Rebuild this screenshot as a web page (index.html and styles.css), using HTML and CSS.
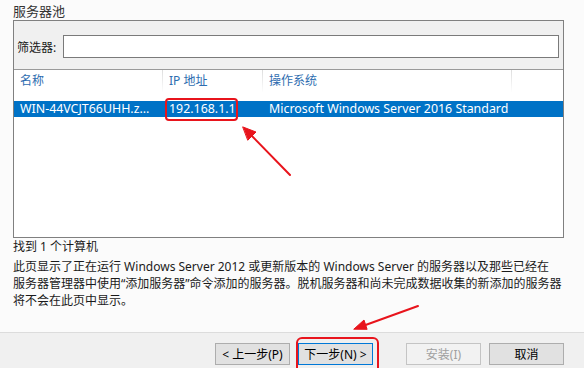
FILE: index.html
```html
<!DOCTYPE html>
<html lang="zh-CN">
<head>
    <meta charset="UTF-8">
    <title>选择目标服务器</title>
    <link rel="stylesheet" href="styles.css">
</head>
<body>
    <div class="pagina">
        <div class="conteudo">
            <div class="titulo">服务器池</div>
            <div class="painel">
                <div class="filtro">
                    <label class="filtro-rotulo" for="filtro">筛选器:</label>
                    <input type="text" id="filtro" class="filtro-campo">
                </div>
                <div class="grade cabecalho">
                    <div class="celula">名称</div>
                    <div class="celula">IP 地址</div>
                    <div class="celula">操作系统</div>
                    <div class="celula"></div>
                </div>
                <div class="grade linha selecionada">
                    <div class="celula">WIN-44VCJT66UHH.z...</div>
                    <div class="celula">192.168.1.1</div>
                    <div class="celula">Microsoft Windows Server 2016 Standard</div>
                    <div class="celula"></div>
                </div>
            </div>
            <div class="status">找到 1 个计算机</div>
            <p class="descricao">此页显示了正在运行 Windows Server 2012 或更新版本的 Windows Server 的服务器以及那些已经在<br>服务器管理器中使用“添加服务器”命令添加的服务器。脱机服务器和尚未完成数据收集的新添加的服务器<br>将不会在此页中显示。</p>
        </div>
        <div class="rodape">
            <button class="botao">&lt; 上一步(P)</button>
            <button class="botao botao-foco">下一步(N) &gt;</button>
            <button class="botao botao-espaco" disabled>安装(I)</button>
            <button class="botao">取消</button>
        </div>
    </div>

    <!-- marcações em vermelho -->
    <div class="marca marca-ip"></div>
    <div class="marca marca-proximo"></div>
    <svg class="setas" width="584" height="368" viewBox="0 0 584 368">
        <g stroke="#e8141c" stroke-width="2" fill="#e8141c" stroke-linecap="round">
            <line x1="290" y1="175" x2="248" y2="132"></line>
            <polygon points="243,127 256,132 248,140" stroke-width="1"></polygon>
            <line x1="418" y1="306" x2="360" y2="327"></line>
            <polygon points="354,329 364,320 367,329" stroke-width="1"></polygon>
        </g>
    </svg>
</body>
</html>
```

FILE: styles.css
```css
body {
    margin: 0;
    font-family: "Noto Sans", "Noto Sans CJK SC", sans-serif;
    font-size: 12px;
    color: #1a1a1a;
    background-color: #fbfbfb;
}

.pagina {
    width: 584px;
    height: 368px;
    display: flex;
    flex-direction: column;
    overflow: hidden;
}

.conteudo {
    height: 332px;
    padding: 0 13px;
    box-sizing: border-box;
}

.titulo {
    height: 20px;
    line-height: 22px;
    font-size: 13px;
    color: #333;
}

.painel {
    width: 551px;
    height: 218px;
    box-sizing: border-box;
    border: 1px solid #808080;
    background-color: #fff;
}

.filtro {
    height: 49px;
    display: flex;
    align-items: center;
    padding: 0 4px 0 3px;
    padding-top: 3px;
    box-sizing: border-box;
    background-color: #f0f0f0;
    border-bottom: 1px solid #9a9a9a;
}

.filtro-rotulo {
    width: 46px;
}

.filtro-campo {
    width: 496px;
    height: 23px;
    box-sizing: border-box;
    margin: 0;
    border: 1px solid #7a7a7a;
    background-color: #fff;
}

.grade {
    display: grid;
    grid-template-columns: 149px 100px 249px 1fr;
}

.cabecalho {
    height: 22px;
    margin-bottom: 9px;
    color: #2e6db0;
}

.cabecalho .celula {
    line-height: 22px;
    padding-left: 6px;
    border-right: 1px solid #e4e4e4;
    border-image: linear-gradient(#dcdcdc, #ffffff) 1;
}

.cabecalho .celula:last-child {
    border: none;
}

.linha .celula {
    font-size: 12.4px;
    line-height: 16px;
    padding-left: 6px;
    white-space: nowrap;
    overflow: hidden;
}

.selecionada {
    background-color: #0072c6;
    color: #fff;
}

.status {
    line-height: 17px;
}

.descricao {
    margin: 3px 0 0;
    line-height: 17px;
    white-space: nowrap;
}

.rodape {
    flex: 1;
    display: flex;
    justify-content: flex-end;
    align-items: flex-start;
    gap: 8px;
    padding: 10px 20px 0 0;
    background-color: #f0f0f0;
    border-top: 1px solid #dcdcdc;
}

.botao {
    width: 75px;
    height: 22px;
    margin: 0;
    padding: 0;
    font-family: "Noto Sans", "Noto Sans CJK SC", sans-serif;
    font-size: 12px;
    color: #000;
    background-color: #e1e1e1;
    border: 1px solid #adadad;
}

.botao-foco {
    border-color: #0078d7;
}

.botao-espaco {
    margin-left: 25px;
}

.botao:disabled {
    color: #a0a0a0;
    background-color: #f2f2f2;
    border-color: #c4c4c4;
}

.marca {
    position: absolute;
    border: 2px solid #e8141c;
    border-radius: 4px;
}

.marca-ip {
    left: 165px;
    top: 98px;
    width: 69px;
    height: 19px;
}

.marca-proximo {
    left: 296px;
    top: 337px;
    width: 79px;
    height: 40px;
    border-radius: 6px;
}

.setas {
    position: absolute;
    left: 0;
    top: 0;
    pointer-events: none;
}
```
